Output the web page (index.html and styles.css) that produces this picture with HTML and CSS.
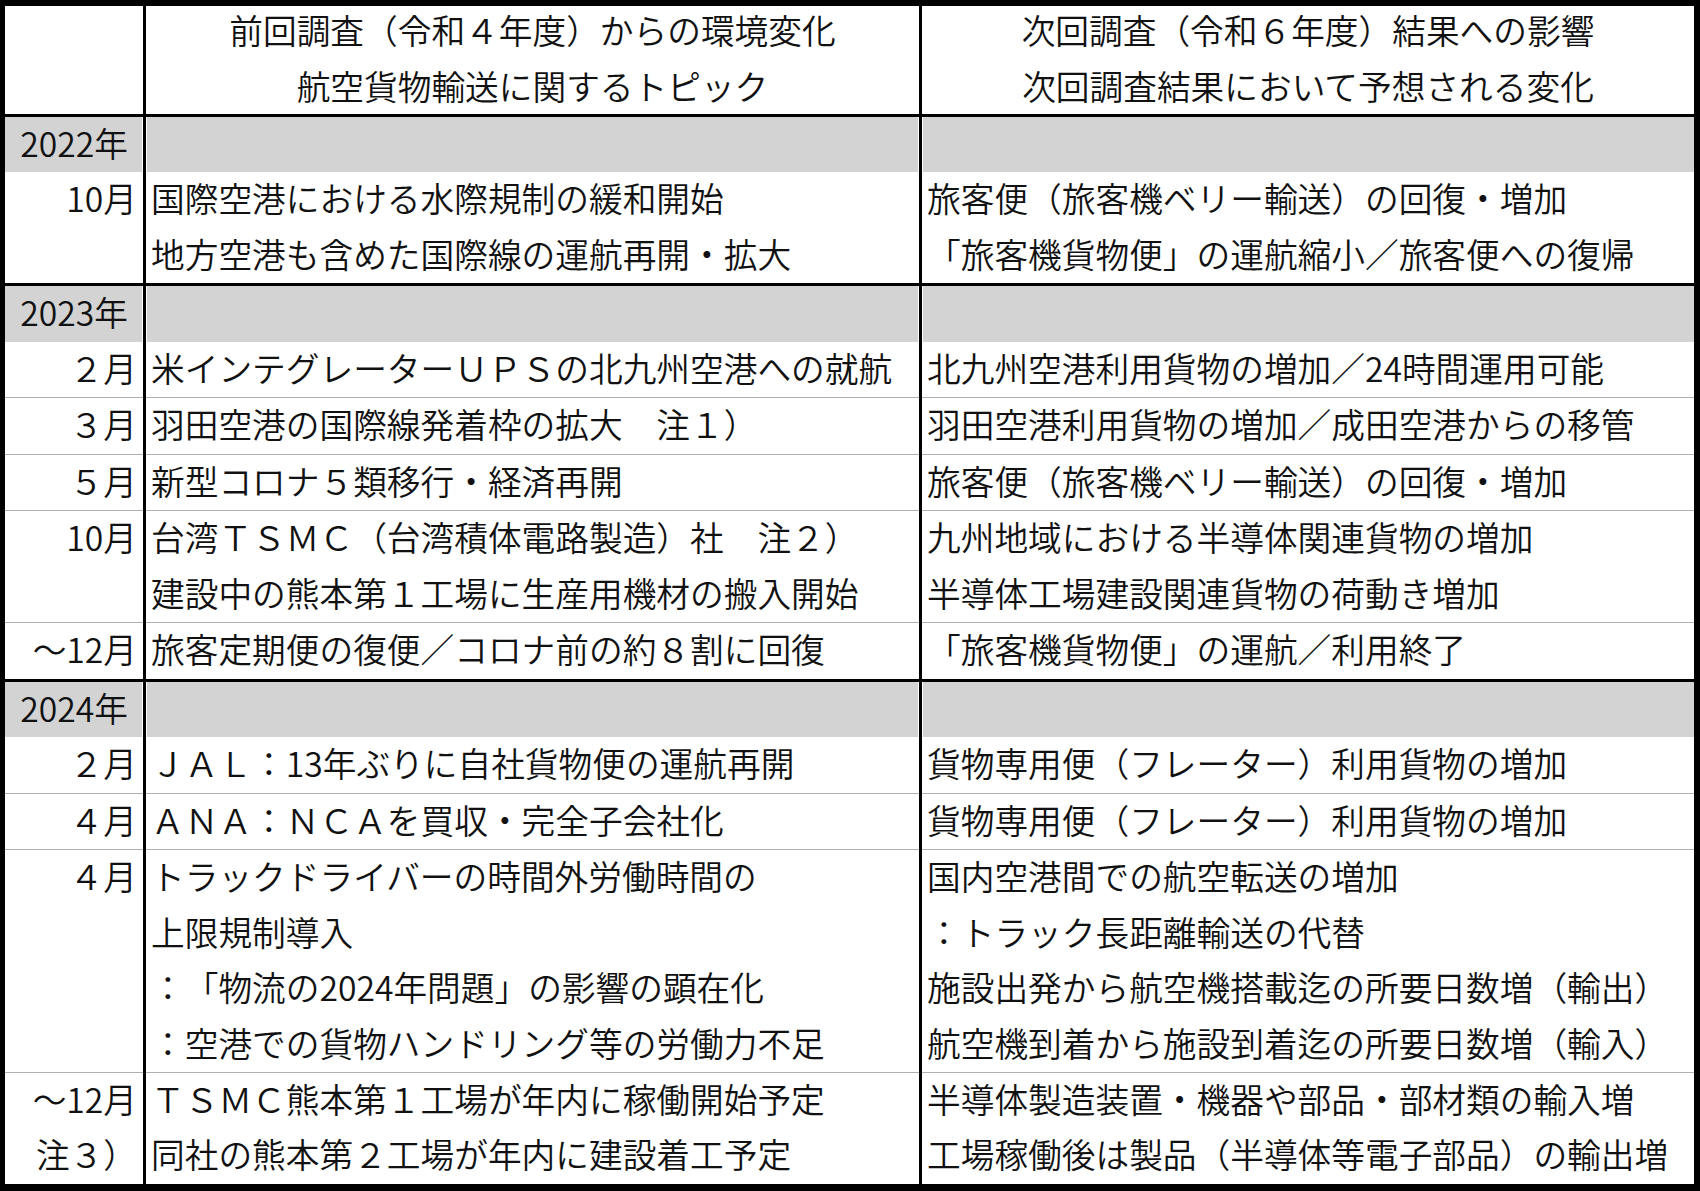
FILE: index.html
```html
<!DOCTYPE html>
<html lang="ja">
<head>
<meta charset="utf-8">
<title>航空貨物輸送に関するトピック</title>
<link rel="stylesheet" href="styles.css">
</head>
<body>
<div class="sheet">
  <div class="row head">
    <div class="cell c1"></div>
    <div class="cell c2 center">
      <div class="ln">前回調査（令和４年度）からの環境変化</div>
      <div class="ln">航空貨物輸送に関するトピック</div>
    </div>
    <div class="cell c3 center">
      <div class="ln">次回調査（令和６年度）結果への影響</div>
      <div class="ln">次回調査結果において予想される変化</div>
    </div>
  </div>

  <section class="group">
    <div class="row year">
      <div class="cell c1 center"><div class="ln">2022年</div></div>
      <div class="cell c2"></div>
      <div class="cell c3"></div>
    </div>
    <div class="row first">
      <div class="cell c1 month"><div class="ln">10月</div></div>
      <div class="cell c2">
        <div class="ln">国際空港における水際規制の緩和開始</div>
        <div class="ln">地方空港も含めた国際線の運航再開・拡大</div>
      </div>
      <div class="cell c3">
        <div class="ln">旅客便（旅客機ベリー輸送）の回復・増加</div>
        <div class="ln">「旅客機貨物便」の運航縮小／旅客便への復帰</div>
      </div>
    </div>
  </section>

  <section class="group">
    <div class="row year">
      <div class="cell c1 center"><div class="ln">2023年</div></div>
      <div class="cell c2"></div>
      <div class="cell c3"></div>
    </div>
    <div class="row first">
      <div class="cell c1 month"><div class="ln">２月</div></div>
      <div class="cell c2"><div class="ln">米インテグレーターＵＰＳの北九州空港への就航</div></div>
      <div class="cell c3"><div class="ln">北九州空港利用貨物の増加／24時間運用可能</div></div>
    </div>
    <div class="row">
      <div class="cell c1 month"><div class="ln">３月</div></div>
      <div class="cell c2"><div class="ln">羽田空港の国際線発着枠の拡大　注１）</div></div>
      <div class="cell c3"><div class="ln">羽田空港利用貨物の増加／成田空港からの移管</div></div>
    </div>
    <div class="row">
      <div class="cell c1 month"><div class="ln">５月</div></div>
      <div class="cell c2"><div class="ln">新型コロナ５類移行・経済再開</div></div>
      <div class="cell c3"><div class="ln">旅客便（旅客機ベリー輸送）の回復・増加</div></div>
    </div>
    <div class="row">
      <div class="cell c1 month"><div class="ln">10月</div></div>
      <div class="cell c2">
        <div class="ln">台湾ＴＳＭＣ（台湾積体電路製造）社　注２）</div>
        <div class="ln">建設中の熊本第１工場に生産用機材の搬入開始</div>
      </div>
      <div class="cell c3">
        <div class="ln">九州地域における半導体関連貨物の増加</div>
        <div class="ln">半導体工場建設関連貨物の荷動き増加</div>
      </div>
    </div>
    <div class="row">
      <div class="cell c1 month"><div class="ln">～12月</div></div>
      <div class="cell c2"><div class="ln">旅客定期便の復便／コロナ前の約８割に回復</div></div>
      <div class="cell c3"><div class="ln">「旅客機貨物便」の運航／利用終了</div></div>
    </div>
  </section>

  <section class="group">
    <div class="row year">
      <div class="cell c1 center"><div class="ln">2024年</div></div>
      <div class="cell c2"></div>
      <div class="cell c3"></div>
    </div>
    <div class="row first">
      <div class="cell c1 month"><div class="ln">２月</div></div>
      <div class="cell c2"><div class="ln">ＪＡＬ：13年ぶりに自社貨物便の運航再開</div></div>
      <div class="cell c3"><div class="ln">貨物専用便（フレーター）利用貨物の増加</div></div>
    </div>
    <div class="row">
      <div class="cell c1 month"><div class="ln">４月</div></div>
      <div class="cell c2"><div class="ln">ＡＮＡ：ＮＣＡを買収・完全子会社化</div></div>
      <div class="cell c3"><div class="ln">貨物専用便（フレーター）利用貨物の増加</div></div>
    </div>
    <div class="row">
      <div class="cell c1 month"><div class="ln">４月</div></div>
      <div class="cell c2">
        <div class="ln">トラックドライバーの時間外労働時間の</div>
        <div class="ln">上限規制導入</div>
        <div class="ln">：「物流の2024年問題」の影響の顕在化</div>
        <div class="ln">：空港での貨物ハンドリング等の労働力不足</div>
      </div>
      <div class="cell c3">
        <div class="ln">国内空港間での航空転送の増加</div>
        <div class="ln">：トラック長距離輸送の代替</div>
        <div class="ln">施設出発から航空機搭載迄の所要日数増（輸出）</div>
        <div class="ln">航空機到着から施設到着迄の所要日数増（輸入）</div>
      </div>
    </div>
    <div class="row">
      <div class="cell c1 month">
        <div class="ln">～12月</div>
        <div class="ln">注３）</div>
      </div>
      <div class="cell c2">
        <div class="ln">ＴＳＭＣ熊本第１工場が年内に稼働開始予定</div>
        <div class="ln">同社の熊本第２工場が年内に建設着工予定</div>
      </div>
      <div class="cell c3">
        <div class="ln">半導体製造装置・機器や部品・部材類の輸入増</div>
        <div class="ln">工場稼働後は製品（半導体等電子部品）の輸出増</div>
      </div>
    </div>
  </section>
</div>
</body>
</html>
```

FILE: styles.css
```css
html, body {
  margin: 0;
  padding: 0;
  background: #ffffff;
}

body {
  width: 1700px;
  height: 1191px;
  overflow: hidden;
  font-family: "Noto Sans CJK JP", "Noto Sans", sans-serif;
  font-size: 33.7px;
  font-weight: 350;
  color: #111111;
  text-spacing-trim: space-all;
}

.sheet {
  box-sizing: border-box;
  width: 1700px;
  height: 1191px;
  border-style: solid;
  border-color: #000;
  border-width: 6px 6px 7px 5px;
  display: flex;
  flex-direction: column;
  background: #fff;
}

.row {
  display: grid;
  grid-template-columns: 138px 773px 772px;
  column-gap: 3px;
  background: #000;
}

.ln {
  height: 55.47px;
  line-height: 51.5px;
}

.head {
  border-bottom: 3px solid #000;
}

.head .ln {
  height: 54px;
  line-height: 48px;
}

.head .ln + .ln {
  line-height: 52px;
}

.group + .group {
  border-top: 3px solid #000;
}

.cell {
  background: #fff;
  white-space: nowrap;
  overflow: hidden;
  padding: 0 5px;
}

.row + .row:not(.first) .cell {
  border-top: 1px solid #b0b0b0;
}

.center {
  text-align: center;
}

.c1.center {
  padding: 0;
}

.month {
  text-align: right;
  padding: 0 6px 0 0;
}

.year .cell {
  background: #d3d3d3;
  box-shadow: inset 1px 0 0 #fff, inset -1px 0 0 #fff;
}

.year .c1 {
  box-shadow: inset -1px 0 0 #fff;
}

.year .c3 {
  box-shadow: inset 1px 0 0 #fff;
}
```
